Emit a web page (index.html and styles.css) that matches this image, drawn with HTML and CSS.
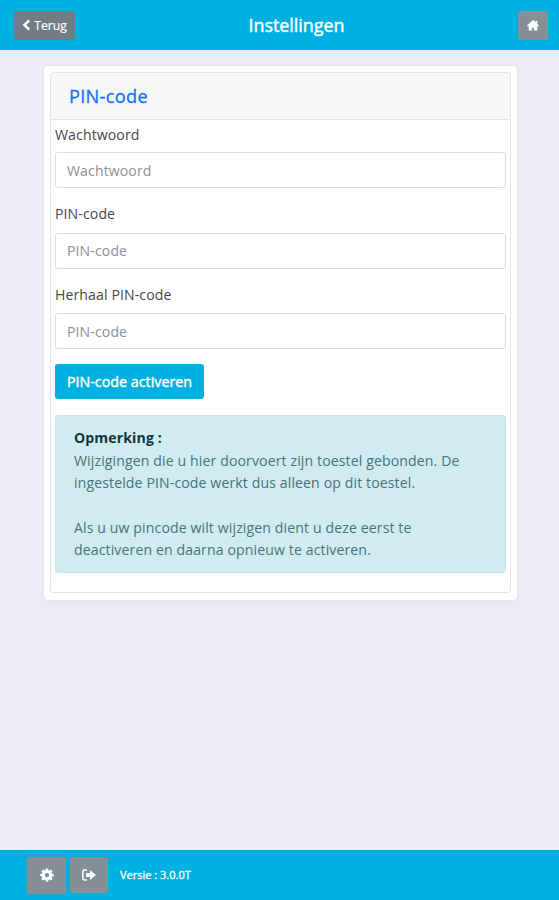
FILE: index.html
```html
<!DOCTYPE html>
<html lang="nl">
<head>
    <meta charset="UTF-8">
    <meta name="viewport" content="width=device-width, initial-scale=1.0">
    <title>Instellingen</title>
    <link rel="stylesheet" href="styles.css">
</head>
<body>

<header class="navbar">
    <button type="button" class="btn btn-back">
        <svg width="9" height="12" viewBox="0 0 9 12"><path d="M7.2 1.4L2.4 6l4.8 4.6" fill="none" stroke="currentColor" stroke-width="2.6"/></svg>
        <span>Terug</span>
    </button>
    <h1>Instellingen</h1>
    <button type="button" class="btn btn-home" aria-label="Home">
        <svg width="12" height="11" viewBox="0 0 12 11"><path d="M6 0L0 5.500l.8.900.9-.7v4.800h3.300V7.800h2v2.700h3.300V5.700l.9.700.8-.9-1.700-1.600V.8H8.500v1.500z" fill="currentColor"/></svg>
    </button>
</header>

<main class="page">
    <div class="panel">
        <div class="card">
            <h2 class="card-header"><a href="#">PIN-code</a></h2>
            <form class="card-body">
                <div class="form-group">
                    <label for="password">Wachtwoord</label>
                    <input type="password" id="password" placeholder="Wachtwoord">
                </div>
                <div class="form-group">
                    <label for="pin">PIN-code</label>
                    <input type="password" id="pin" placeholder="PIN-code">
                </div>
                <div class="form-group">
                    <label for="pinRepeat">Herhaal PIN-code</label>
                    <input type="password" id="pinRepeat" placeholder="PIN-code">
                </div>
                <button type="submit" class="btn-submit">PIN-code activeren</button>
                <div class="alert">
                    <strong>Opmerking :</strong><br>
                    Wijzigingen die u hier doorvoert zijn toestel gebonden. De<br>
                    ingestelde PIN-code werkt dus alleen op dit toestel.<br>
                    <br>
                    Als u uw pincode wilt wijzigen dient u deze eerst te<br>
                    deactiveren en daarna opnieuw te activeren.
                </div>
            </form>
        </div>
    </div>
</main>

<footer class="footer">
    <button type="button" class="btn btn-settings" aria-label="Instellingen">
        <svg width="14" height="14" viewBox="0 0 14 14"><path d="M5.800.500h2.400l.3 1.700 1 .4 1.500-1 1.600 1.600-1 1.500.4 1 1.700.3v2.200l-1.700.3-.4 1 1 1.500-1.600 1.600-1.500-1-1 .4-.3 1.700H5.800l-.3-1.700-1-.4-1.500 1L1.400 11l1-1.500-.4-1L.300 8.200V6L2 5.700l.4-1-1-1.500L3 1.600l1.500 1 1-.4zM7 4.900a2.200 2.200 0 1 0 0 4.400 2.200 2.200 0 0 0 0-4.400z" fill="currentColor" fill-rule="evenodd"/></svg>
    </button>
    <button type="button" class="btn btn-logout" aria-label="Uitloggen">
        <svg width="14" height="12" viewBox="0 0 14 12"><path d="M5 1H2.500Q.8 1 .8 2.700v6.600Q.8 11 2.500 11H5" fill="none" stroke="currentColor" stroke-width="1.500"/><path d="M8 1l6 5-6 5V8H4V4h4z" fill="currentColor"/></svg>
    </button>
    <span class="version">Versie : 3.0.0T</span>
</footer>

</body>
</html>
```
FILE: styles.css
```css
* {
    box-sizing: border-box;
}
body {
    font-family: "Open Sans", "Noto Sans", sans-serif;
    font-size: 14.1px;
    line-height: 22.4px;
    color: #43484d;
    background-color: #eaebf4;
    margin: 0;
    height: 100vh;
    display: flex;
    flex-direction: column;
}
button, input {
    font-family: inherit;
}
.navbar {
    height: 50px;
    padding: 0 11px 0 14px;
    background-color: #00b0e1;
    display: flex;
    align-items: center;
    justify-content: space-between;
}
.navbar h1 {
    margin: 0;
    font-size: 17.9px;
    font-weight: 500;
    color: white;
    -webkit-text-stroke: 0.4px white;
}
.btn {
    display: flex;
    align-items: center;
    justify-content: center;
    border: none;
    border-radius: 3px;
    padding: 0;
    color: white;
    background-color: #868e96;
}
.btn-back {
    width: 61px;
    height: 29px;
    gap: 3px;
    font-size: 12.2px;
    background-color: #717c87;
    -webkit-text-stroke: 0.2px white;
}
.btn-home {
    width: 30px;
    height: 29px;
}
.page {
    flex: 1;
    padding: 16px 42px 0 44px;
}
.panel {
    height: 534px;
    padding: 6px;
    background-color: white;
    border-radius: 4px;
    box-shadow: 0 0 2px rgba(0, 0, 0, 0.1);
}
.card {
    height: 521px;
    border: 1px solid #e2e4e6;
    border-radius: 3px;
}
.card-header {
    margin: 0;
    height: 47px;
    padding: 1px 18px 0;
    display: flex;
    align-items: center;
    font-size: 18.2px;
    font-weight: 500;
    letter-spacing: 0.3px;
    background-color: #f7f7f7;
    border-bottom: 1px solid #e2e4e6;
}
.card-header a {
    color: #1473f5;
    text-decoration: none;
    -webkit-text-stroke: 0.3px #1473f5;
}
.card-body {
    padding: 4px 4px 0;
}
.form-group {
    margin-bottom: 15px;
}
label {
    display: block;
    margin-bottom: 7px;
    letter-spacing: 0.1px;
}
.form-group:first-child label {
    margin-bottom: 6px;
}
input {
    display: block;
    width: 100%;
    height: 36px;
    padding: 0 11px;
    font-size: 14.1px;
    letter-spacing: 0.1px;
    border: 1px solid #d9dee2;
    border-radius: 3px;
    background-color: white;
}
input::placeholder {
    color: #8b9299;
}
.btn-submit {
    display: block;
    width: 149px;
    height: 35px;
    padding: 0;
    border: none;
    border-radius: 3px;
    font-size: 14.3px;
    font-weight: 500;
    color: white;
    background-color: #00b0e1;
    -webkit-text-stroke: 0.4px white;
}
.alert {
    margin-top: 16px;
    height: 158px;
    padding: 11px 18px;
    color: #49727a;
    background-color: #d1ecf0;
    border: 1px solid #c5e7ec;
    border-radius: 3px;
    letter-spacing: 0.11px;
    white-space: nowrap;
}
.alert strong {
    color: #10353c;
}
.footer {
    height: 50px;
    padding-left: 27px;
    background-color: #00b0e1;
    display: flex;
    align-items: center;
}
.btn-settings {
    width: 39px;
    height: 37px;
    margin-right: 4px;
    box-shadow: 0 0 2px #868e96;
}
.btn-logout {
    width: 38px;
    height: 36px;
}
.version {
    margin-left: 12px;
    font-size: 11px;
    font-weight: 500;
    color: white;
    -webkit-text-stroke: 0.3px white;
}
```
